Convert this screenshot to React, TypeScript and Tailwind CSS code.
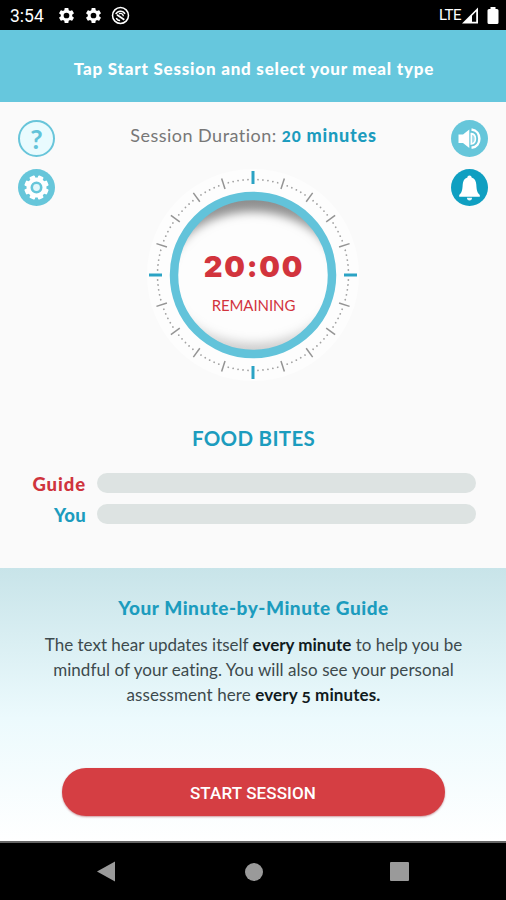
import React from "react";

const TICKS = Array.from({ length: 20 }, (_, i) => i * 18);
const DOTS = Array.from({ length: 120 }, (_, i) => i * 3).filter((a) => a % 18 !== 0);

const GEAR =
  "M19.14 12.94c.04-.3.06-.61.06-.94s-.02-.64-.07-.94l2.03-1.58a.49.49 0 0 0 .12-.61l-1.92-3.32a.49.49 0 0 0-.59-.22l-2.39.96c-.5-.38-1.03-.7-1.62-.94l-.36-2.54a.48.48 0 0 0-.48-.41h-3.84a.47.47 0 0 0-.47.41l-.36 2.54c-.59.24-1.13.57-1.62.94l-2.39-.96a.48.48 0 0 0-.59.22L2.74 8.87a.47.47 0 0 0 .12.61l2.03 1.58c-.05.3-.09.63-.09.94s.02.64.07.94l-2.03 1.58a.49.49 0 0 0-.12.61l1.92 3.32c.12.22.37.29.59.22l2.39-.96c.5.38 1.03.7 1.62.94l.36 2.54c.05.24.24.41.48.41h3.84c.24 0 .44-.17.47-.41l.36-2.54c.59-.24 1.13-.56 1.62-.94l2.39.96c.22.08.47 0 .59-.22l1.92-3.32a.47.47 0 0 0-.12-.61zM12 15.6a3.6 3.6 0 1 1 0-7.2 3.6 3.6 0 0 1 0 7.2z";

function StatusGear() {
  return (
    <svg viewBox="0 0 24 24" className="size-[19px]" fill="#fff">
      <path d={GEAR} />
    </svg>
  );
}

function StatusBar() {
  return (
    <div className="flex h-[30px] shrink-0 items-center bg-black pl-[10px] pr-[7px] text-white">
      <span className="w-[47px] pt-[2px] font-[Roboto,sans-serif] text-[17.5px] leading-[28px]">3:54</span>
      <div className="flex items-center gap-[8px]">
        <StatusGear />
        <StatusGear />
        <svg viewBox="0 0 20 20" className="size-[19px]" fill="none" stroke="#fff">
          <circle cx="10" cy="10" r="8.4" strokeWidth="1.600" />
          <path d="M5 8.500C6.800 4.800 12.500 4.200 14.700 8.200" strokeWidth="1.600" />
          <path d="M5.600 12.600C6.200 14.300 8 15.300 9.600 15.200" strokeWidth="1.500" />
          <path d="M6.300 9.300 14 14.500" strokeWidth="1.900" />
          <path d="M8.500 8.200c2-1.200 4.300.2 4.500 2.600" strokeWidth="1.500" />
        </svg>
      </div>
      <div className="ml-auto flex items-center">
        <span className="font-[Roboto,sans-serif] text-[15px] leading-[30px] tracking-[-0.500px]">LTE</span>
        <svg viewBox="0 0 17 17" className="ml-[1px] mr-[8px] size-[17px]">
          <path fillRule="evenodd" fill="#fff" d="M0 16.500 16 .5v16zM10 8.800v6h4.200V4.500z" />
        </svg>
        <svg viewBox="0 0 12 17" className="h-[17px] w-[12px]" fill="#fff">
          <path d="M3.500 0h5v2H10q1.500 0 1.500 1.500v12q0 1.500-1.500 1.500H2Q.5 17 .5 15.500v-12Q.5 2 2 2h1.500z" />
        </svg>
      </div>
    </div>
  );
}

function HelpIcon() {
  return (
    <button className="flex size-[37px] items-center justify-center rounded-full border-[2px] border-[#68c5da] bg-[#e9fbfe] font-[Lato,sans-serif] text-[27px] font-bold leading-none text-[#62c3d9]">
      ?
    </button>
  );
}

function SettingsIcon() {
  return (
    <svg viewBox="0 0 37 37" className="size-[37px]">
      <circle cx="18.500" cy="18.500" r="18.500" fill="#66c6da" />
      <circle cx="18.500" cy="18.500" r="8" fill="none" stroke="#fff" strokeWidth="4" />
      {[22.5, 67.5, 112.5, 157.5, 202.5, 247.5, 292.5, 337.5].map((a) => (
        <rect key={a} x="15.700" y="6.300" width="5.600" height="4.500" rx="1" fill="#fff" transform={`rotate(${a} 18.500 18.500)`} />
      ))}
      <circle cx="18.500" cy="18.500" r="3.400" fill="#e2f7fb" />
    </svg>
  );
}

function SoundIcon() {
  return (
    <svg viewBox="0 0 37 37" className="size-[37px]">
      <circle cx="18.500" cy="18.500" r="18.500" fill="#66c6da" />
      <path d="M7.500 14.500H12L18.300 9.500v18.500L12 23H7.500z" fill="#fff" />
      <path d="M20.300 13.600c5.500.6 5.500 9.800 0 10.400z" fill="#9fdce9" stroke="#fff" strokeWidth="1.600" />
      <path d="M20.500 9.600c10.500 1.200 10.500 17 0 18.200" fill="none" stroke="#fff" strokeWidth="2.500" />
    </svg>
  );
}

function BellIcon() {
  return (
    <svg viewBox="0 0 37 37" className="size-[37px]">
      <circle cx="18.500" cy="18.500" r="18.500" fill="#0f9fc1" />
      <path
        d="M18.500 6.500c1.300 0 2.100.8 2.100 2 3.100 1 4.500 3.600 4.700 7.100.3 5.600.9 8.300 3.500 10.300v1.900H8.200v-1.900c2.600-2 3.200-4.700 3.500-10.300.2-3.500 1.600-6.100 4.700-7.100 0-1.200.8-2 2.100-2z"
        fill="#fff"
      />
      <path d="M16 28.800h5a2.500 2.700 0 0 1-5 0z" fill="#e6f8fb" />
    </svg>
  );
}

function Dial() {
  return (
    <div className="grid size-[220px] place-items-center">
      <svg viewBox="-110 -110 220 220" className="col-start-1 row-start-1 size-[220px]">
        <defs>
          <clipPath id="face">
            <circle r="76" />
          </clipPath>
          <linearGradient id="shade" x1="0" y1="0" x2="0" y2="1">
            <stop offset="0" stopColor="#8f8f8f" />
            <stop offset="0.300" stopColor="#a5a5a5" />
            <stop offset="0.520" stopColor="#f3f3f3" />
            <stop offset="0.750" stopColor="#e6e6e6" />
            <stop offset="1" stopColor="#cfcfcf" />
          </linearGradient>
          <filter id="soft" x="-20%" y="-20%" width="140%" height="140%">
            <feGaussianBlur stdDeviation="5" />
          </filter>
        </defs>
        <circle r="106" fill="#fdfdfd" />
        <g clipPath="url(#face)">
          <circle r="76" fill="url(#shade)" />
          <ellipse cy="2" rx="84" ry="65" fill="#fdfdfd" filter="url(#soft)" />
        </g>
        <circle r="79" fill="none" stroke="#62c3da" strokeWidth="8.500" />
        {DOTS.map((a) => (
          <circle key={a} cy="-95.500" r="0.900" fill="#a3a3a3" transform={`rotate(${a})`} />
        ))}
        {TICKS.map((a) =>
          a % 90 === 0 ? (
            <line key={a} y1="-91" y2="-104" stroke="#2ba3c4" strokeWidth="3" transform={`rotate(${a})`} />
          ) : (
            <line key={a} y1="-90.500" y2="-101.500" stroke="#949494" strokeWidth="1.500" transform={`rotate(${a})`} />
          ),
        )}
      </svg>
      <div className="z-10 col-start-1 row-start-1 flex flex-col items-center whitespace-nowrap pt-[12px] text-[#d2343d]">
        <span className="pl-[1px] font-[Inter,sans-serif] text-[29px] font-black leading-[38px] tracking-[1.800px]">20:00</span>
        <span className="mt-[9px] font-[Lato,sans-serif] text-[15px] leading-[20px] tracking-[-0.080px]">REMAINING</span>
      </div>
    </div>
  );
}

function BiteRow({ label, color }: { label: string; color: string }) {
  return (
    <div className="flex h-[20px] items-center">
      <span className={`w-[86px] pt-[2px] text-right text-[18.500px] font-black leading-[20px] ${color}`}>{label}</span>
      <div className="ml-[11px] h-[20px] w-[379px] rounded-full bg-[#dde3e2]" />
    </div>
  );
}

export default function App() {
  return (
    <div className="flex h-[900px] w-[506px] flex-col overflow-hidden whitespace-nowrap bg-[#fafafa] font-[Lato,sans-serif]">
      <StatusBar />
      <header className="flex h-[72px] shrink-0 items-center justify-center bg-[#66c7dd] pl-[2px] pt-[5px] text-[17px] font-black tracking-[0.780px] text-white">
        <span>Tap Start Session and select your meal type</span>
      </header>

      <main className="flex h-[466px] shrink-0 flex-col">
        <div className="flex h-[285px] justify-between px-[18px]">
          <div className="flex w-[37px] flex-col gap-[12px] pt-[18px]">
            <HelpIcon />
            <SettingsIcon />
          </div>
          <div className="flex flex-col items-center pl-[1px] pt-[21px]">
            <div className="h-[24px] text-[18px] leading-[24px] text-[#777]">
              <span className="tracking-[0.480px]">Session Duration: </span>
              <span className="font-black tracking-[0.800px] text-[#1c9cbe]">
                <span className="text-[15.500px]">20</span> minutes
              </span>
            </div>
            <div className="mt-[18px]">
              <Dial />
            </div>
          </div>
          <div className="flex w-[37px] flex-col gap-[12px] pt-[18px]">
            <SoundIcon />
            <BellIcon />
          </div>
        </div>
        <h2 className="mt-[39px] pl-[1px] text-center text-[20.500px] font-bold leading-[24px] tracking-[0.300px] text-[#1c9cbe]">FOOD BITES</h2>
        <div className="mt-[23px] flex flex-col gap-[11px]">
          <BiteRow label="Guide" color="text-[#cf343d] tracking-[0.900px]" />
          <BiteRow label="You" color="text-[#1c9cbe] tracking-[0.300px]" />
        </div>
      </main>

      <section className="flex h-[273px] shrink-0 flex-col items-center bg-linear-to-b from-[#c8e4e9] via-[#ecfafd] via-55% to-white pt-[28px]">
        <h2 className="pl-[1px] text-[19px] font-black leading-[24px] tracking-[0.520px] text-[#1c9cbe]">Your Minute-by-Minute Guide</h2>
        <div className="mt-[12px] flex flex-col items-center pl-[1px] text-[17px] leading-[25px] text-[#3d4a4d]">
          <p>
            The text hear updates itself <b className="text-[#111b1e]">every minute</b> to help you be
          </p>
          <p className="tracking-[0.060px]">mindful of your eating. You will also see your personal</p>
          <p className="tracking-[0.090px]">
            assessment here{" "}
            <b className="text-[#111b1e]">
              every <span className="inline-block translate-y-[2px] text-[16px] leading-none">5</span> minutes.
            </b>
          </p>
        </div>
        <button className="mt-[61px] h-[48px] w-[383px] rounded-full bg-[#d53e43] pt-[3px] font-[Roboto,sans-serif] text-[17px] font-medium tracking-[0.120px] text-white shadow-[0_1px_2px_rgba(150,30,40,0.45)]">
          START SESSION
        </button>
      </section>

      <nav className="flex h-[59px] shrink-0 items-center border-t-2 border-[#666] bg-black pl-[97px]">
        <svg viewBox="0 0 18 20" className="h-[21px] w-[18px]">
          <path d="M0 10 18 0v20z" fill="#9a9a9a" />
        </svg>
        <div className="ml-[130px] size-[18px] rounded-full bg-[#9a9a9a]" />
        <div className="ml-[127px] size-[19px] rounded-[1px] bg-[#9a9a9a]" />
      </nav>
    </div>
  );
}
